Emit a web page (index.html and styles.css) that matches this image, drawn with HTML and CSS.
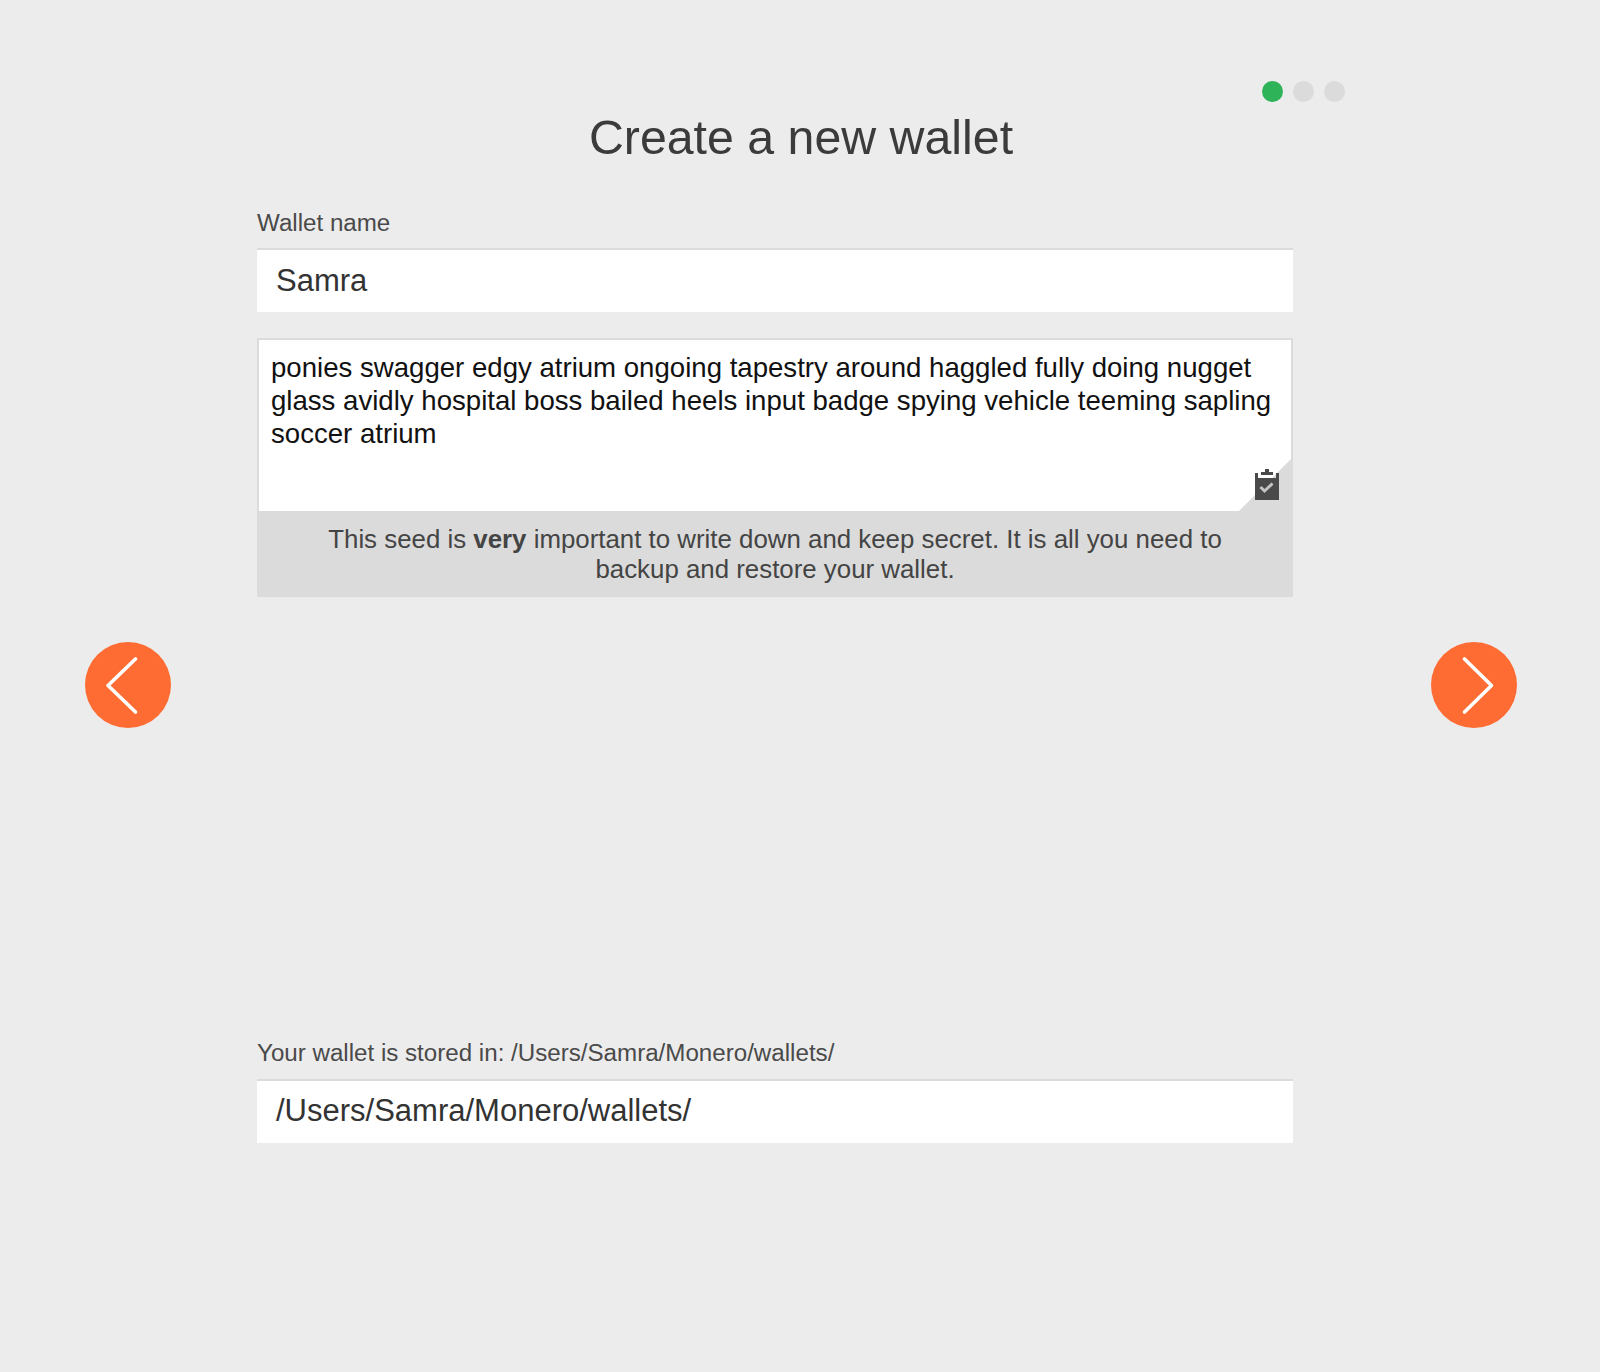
FILE: index.html
```html
<!DOCTYPE html>
<html lang="en">
<head>
  <meta charset="UTF-8" />
  <title>Create a new wallet</title>
  <link rel="stylesheet" href="styles.css">
</head>
<body>
  <div class="page">
    <button class="nav-btn" aria-label="Back">
      <svg width="86" height="86" viewBox="0 0 86 86"><path d="M50.5 17 L23 43.5 L50.5 70" /></svg>
    </button>

    <main class="content">
      <div class="steps">
        <span class="dot active"></span>
        <span class="dot"></span>
        <span class="dot"></span>
      </div>
      <h1>Create a new wallet</h1>

      <div class="form">
        <label class="label">Wallet name</label>
        <div class="input">Samra</div>

        <div class="seed-box">
          <div class="seed">ponies swagger edgy atrium ongoing tapestry around haggled fully doing nugget glass avidly hospital boss bailed heels input badge spying vehicle teeming sapling soccer atrium</div>
          <div class="corner"></div>
          <svg class="clip" width="26" height="32" viewBox="0 0 26 32">
            <path fill="#4a4a4a" d="M11 0h4v3h4v3h-12v-3h4z" />
            <path fill="#4a4a4a" d="M1 4h3v5h18v-5h3v27h-24z" />
            <path fill="none" stroke="#c4c4c4" stroke-width="3" d="M6.5 18l4 4 8-7.5" />
          </svg>
        </div>
        <p class="note">This seed is <b>very</b> important to write down and keep secret. It is all you need to backup and restore your wallet.</p>

        <label class="label stored">Your wallet is stored in: /Users/Samra/Monero/wallets/</label>
        <div class="input">/Users/Samra/Monero/wallets/</div>
      </div>
    </main>

    <button class="nav-btn" aria-label="Next">
      <svg width="86" height="86" viewBox="0 0 86 86"><path d="M33.5 17 L60.5 43.5 L33.5 70" /></svg>
    </button>
  </div>
</body>
</html>
```

FILE: styles.css
```css
* { box-sizing: border-box; }
body {
  margin: 0;
  font-family: 'Liberation Sans', Arial, sans-serif;
  background: #ececec;
  color: #3b3b3b;
}
.page {
  display: flex;
  align-items: center;
  height: 1372px;
  padding: 0 83px 2px 85px;
}
.nav-btn {
  flex: none;
  width: 86px;
  height: 86px;
  padding: 0;
  border: none;
  border-radius: 50%;
  background: #ff6c33;
  cursor: pointer;
}
.nav-btn svg { display: block; }
.nav-btn path {
  fill: none;
  stroke: white;
  stroke-width: 3.6;
  stroke-linecap: round;
  stroke-linejoin: round;
}
.content {
  position: relative;
  flex: 1;
  align-self: stretch;
  padding-top: 107px;
}
.steps {
  position: absolute;
  top: 81px;
  left: 1090.5px;
  display: flex;
  gap: 10px;
}
.dot {
  width: 21px;
  height: 21px;
  border-radius: 50%;
  background: #dbdbdb;
}
.dot.active { background: #2eb358; }
h1 {
  margin: 0;
  width: 1260px;
  text-align: center;
  font-size: 48.3px;
  font-weight: normal;
  line-height: 60px;
  color: #3b3b3b;
}
.form {
  width: 1036px;
  margin-left: 86px;
  padding-top: 42px;
}
.label {
  display: block;
  font-size: 24.15px;
  line-height: 27px;
  color: #4a4a4a;
}
.label.stored {
  margin-top: 442px;
  line-height: 28px;
}
.input {
  height: 64px;
  margin-top: 12px;
  padding: 0 19px;
  background: white;
  border-top: 2px solid #dbdbdb;
  font-size: 31px;
  line-height: 62px;
  color: #333;
}
.stored + .input { line-height: 60px; }
.seed-box {
  position: relative;
  height: 173px;
  margin-top: 26px;
  background: white;
  border: 2px solid #dbdbdb;
  border-bottom: none;
  overflow: hidden;
}
.seed {
  padding: 12px 12px 0;
  font-size: 27.6px;
  line-height: 32.8px;
  color: #111;
}
.corner {
  position: absolute;
  right: 0;
  bottom: 0;
  width: 52px;
  height: 52px;
  background: #dbdbdb;
  clip-path: polygon(100% 0, 100% 100%, 0 100%);
}
.clip {
  position: absolute;
  right: 11px;
  bottom: 10px;
}
.note {
  margin: 0;
  height: 86px;
  padding: 14px 60px 0;
  background: #dbdbdb;
  text-align: center;
  font-size: 25.85px;
  line-height: 29.6px;
  color: #444;
}
```
